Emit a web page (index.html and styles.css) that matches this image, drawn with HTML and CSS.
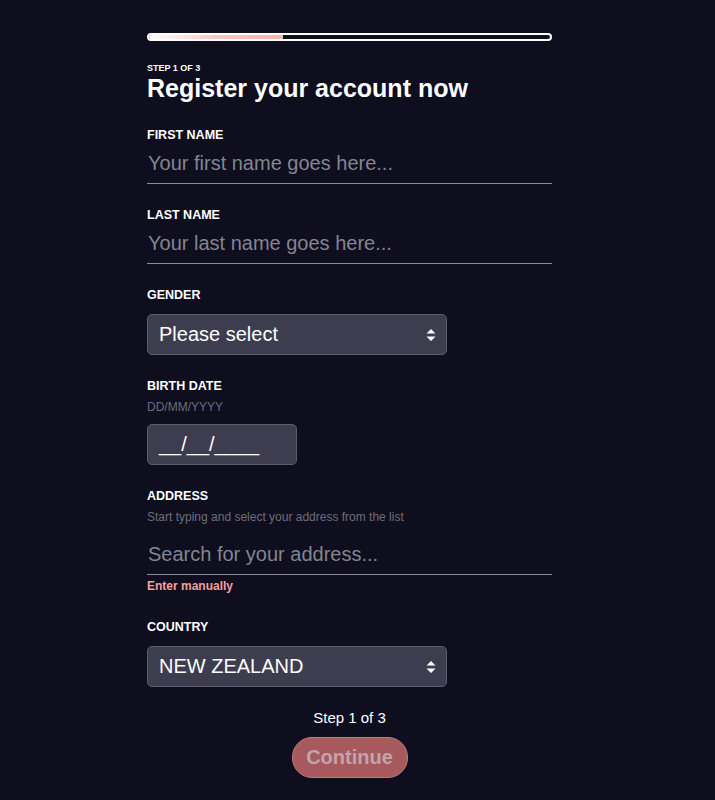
FILE: index.html
```html
<!DOCTYPE html>
<html>
<head>
<meta charset="utf-8">
<link rel="stylesheet" href="styles.css">
</head>
<body>
<div class="wrap">
  <div class="progress"><div class="progress-fill" style="width:33.3%"></div></div>
  <div class="step-kicker">STEP 1 OF 3</div>
  <h1 class="title">Register your account now</h1>

  <div class="field">
    <label class="label">FIRST NAME</label>
    <input class="line-input" type="text" placeholder="Your first name goes here...">
  </div>

  <div class="field">
    <label class="label">LAST NAME</label>
    <input class="line-input" type="text" placeholder="Your last name goes here...">
  </div>

  <div class="field">
    <label class="label">GENDER</label>
    <div class="select">
      <span class="select-text">Please select</span>
      <svg class="arrows" width="10" height="14" viewBox="0 0 10 14"><path d="M5 1 L9.5 5.5 H0.5 Z M5 13 L9.5 8.5 H0.5 Z" fill="#fff"/></svg>
    </div>
  </div>

  <div class="field">
    <label class="label">BIRTH DATE</label>
    <div class="hint">DD/MM/YYYY</div>
    <div class="date-box"><span class="date-text">__/__/____</span></div>
  </div>

  <div class="field">
    <label class="label">ADDRESS</label>
    <div class="hint">Start typing and select your address from the list</div>
    <input class="line-input addr" type="text" placeholder="Search for your address...">
    <a class="manual">Enter manually</a>
  </div>

  <div class="field">
    <label class="label">COUNTRY</label>
    <div class="select">
      <span class="select-text">NEW ZEALAND</span>
      <svg class="arrows" width="10" height="14" viewBox="0 0 10 14"><path d="M5 1 L9.5 5.5 H0.5 Z M5 13 L9.5 8.5 H0.5 Z" fill="#fff"/></svg>
    </div>
  </div>

  <div class="footer">
    <div class="step-count">Step 1 of 3</div>
    <button class="continue">Continue</button>
  </div>
</div>
</body>
</html>
```

FILE: styles.css
```css
html, body {
  margin: 0;
  padding: 0;
  background: #0e0e1f;
  font-family: "Liberation Sans", Arial, sans-serif;
  color: #fff;
}
.wrap {
  width: 405px;
  margin-left: 147px;
  padding-top: 33px;
}
.progress {
  height: 4px;
  border: 2px solid #fff;
  border-radius: 6px;
  overflow: hidden;
}
.progress-fill {
  height: 100%;
  background: linear-gradient(90deg, #ffffff 0%, #f6c7c7 50%, #f5b2b2 100%);
}
.step-kicker {
  margin-top: 22px;
  font-size: 9px;
  font-weight: bold;
  line-height: 10px;
}
.title {
  margin: 1px 0 0 0;
  font-size: 25px;
  font-weight: bold;
  line-height: 28px;
}
.field {
  display: flex;
  flex-direction: column;
  align-items: flex-start;
  margin-top: 26px;
}
.field + .field {
  margin-top: 24px;
}
.label {
  font-size: 12.5px;
  font-weight: bold;
  line-height: 14px;
}
.line-input {
  width: 100%;
  box-sizing: border-box;
  margin-top: 5px;
  background: transparent;
  border: none;
  border-bottom: 1px solid #8b8a99;
  padding: 5px 0 8px 1px;
  font-family: "Liberation Sans", Arial, sans-serif;
  font-size: 20px;
  line-height: 23px;
  color: #fff;
  outline: none;
}
.line-input::placeholder {
  color: #85848f;
}
.line-input.addr {
  margin-top: 14px;
}
.hint {
  margin-top: 7px;
  font-size: 12px;
  line-height: 14px;
  color: #6e6d7a;
}
.select {
  margin-top: 12px;
  width: 300px;
  height: 41px;
  box-sizing: border-box;
  border: 1px solid #5d5c6c;
  border-radius: 5px;
  background: #3e3d4f;
  display: flex;
  align-items: center;
  justify-content: space-between;
  padding: 0 10px 0 11px;
}
.select-text {
  font-size: 20px;
  color: #fff;
}
.arrows {
  display: block;
}
.date-box {
  margin-top: 10px;
  width: 150px;
  height: 41px;
  box-sizing: border-box;
  border: 1px solid #5d5c6c;
  border-radius: 5px;
  background: #3e3d4f;
  display: flex;
  align-items: center;
  padding-left: 11px;
}
.date-text {
  font-size: 20px;
  color: #fff;
}
.manual {
  margin-top: 4px;
  margin-bottom: 3px;
  font-size: 12px;
  font-weight: bold;
  color: #f2a0a0;
  line-height: 14px;
}
.footer {
  margin-top: 22px;
  display: flex;
  flex-direction: column;
  align-items: center;
}
.step-count {
  font-size: 15px;
  line-height: 18px;
}
.continue {
  margin-top: 10px;
  width: 116px;
  height: 41px;
  border-radius: 20px;
  border: 1px solid #c07a7c;
  background: #a65a5d;
  color: #c3a4ab;
  font-family: "Liberation Sans", Arial, sans-serif;
  font-size: 20px;
  font-weight: bold;
  padding: 0;
}
```
